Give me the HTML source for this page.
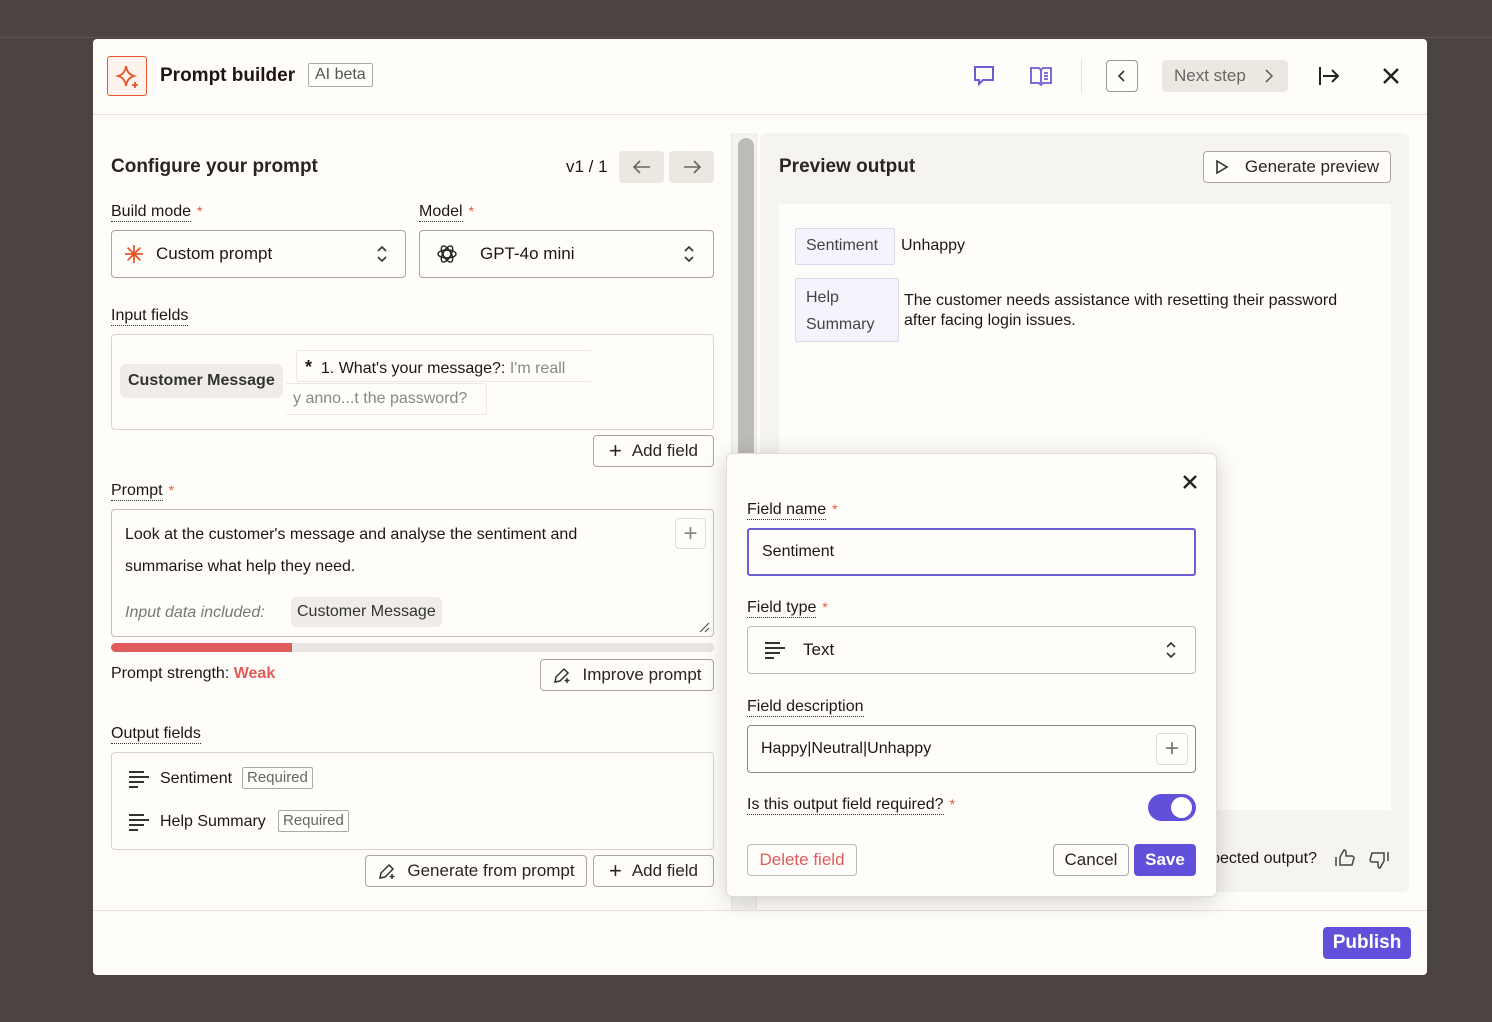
<!DOCTYPE html>
<html><head><meta charset="utf-8"><style>
*{box-sizing:border-box;margin:0;padding:0}
body{width:1492px;height:1022px;background:#4b4443;font-family:"Liberation Sans",sans-serif;color:#201515;position:relative;overflow:hidden;font-size:16px}
.a{position:absolute}
.modal{left:93px;top:39px;width:1334px;height:936px;background:#fffdf9;border-radius:4px}
.lbl{font-size:16px;border-bottom:1px dotted #333;line-height:19px;display:inline-block}
.star{color:#e4572e;margin-left:6px;font-size:14px}
.box{border:1px solid #c5c0bb;border-radius:4px;background:#fffdf9}
.btn{border:1px solid #aaa5a0;border-radius:4px;background:#fffdf9;font-size:16px;display:flex;align-items:center;justify-content:center;gap:10px;color:#2b2424}
.tag{border:1px solid #aaa;border-radius:2px;color:#666;font-size:15px;padding:1px 4px;line-height:18px}
.pill{background:#f0ede8;border-radius:6px}
svg{display:block}
</style></head><body>
<div class="a" style="left:0;top:0;width:1492px;height:38px;border-bottom:1px solid #5a5352"></div>
<div class="a modal">
 <div class="a" style="left:14px;top:17px;width:40px;height:40px;border:1px solid #e4572e;border-radius:3px;background:#fdf2ec">
  <svg width="40" height="40" viewBox="0 0 40 40"><path d="M18 9 Q19 17 26 19 Q19 21 18 29 Q17 21 10 19 Q17 17 18 9Z" fill="none" stroke="#e4572e" stroke-width="1.8"/><path d="M27 25 v6 M24 28 h6" stroke="#e4572e" stroke-width="1.8"/></svg>
 </div>
 <div class="a" style="left:67px;top:26px;font-size:19px;font-weight:bold">Prompt builder</div>
 <div class="a" style="left:215px;top:24px;border:1px solid #aaa;border-radius:2px;padding:2px 6px;font-size:16px;color:#555">AI beta</div>
 <svg class="a" style="left:879px;top:25px" width="24" height="24" viewBox="0 0 24 24"><path d="M3 3h18v13H11l-4 4v-4H3z" fill="none" stroke="#6a5ed6" stroke-width="2"/></svg>
 <svg class="a" style="left:936px;top:25px" width="24" height="24" viewBox="0 0 24 24"><path d="M2 4h8l2 2 2-2h8v15h-8l-2 2-2-2H2zM12 6v13M15 9h4M15 12h4M15 15h4" fill="none" stroke="#6a5ed6" stroke-width="1.8"/></svg>
 <div class="a" style="left:988px;top:20px;width:1px;height:34px;background:#e6e2dd"></div>
 <div class="a box" style="left:1013px;top:21px;width:32px;height:32px;border-color:#999;display:flex;align-items:center;justify-content:center"><svg width="12" height="12" viewBox="0 0 12 12"><path d="M8 1L3 6l5 5" fill="none" stroke="#333" stroke-width="1.6"/></svg></div>
 <div class="a" style="left:1069px;top:21px;width:126px;height:32px;background:#ebe8e2;border-radius:4px;color:#6b6562;font-size:17px;display:flex;align-items:center;padding-left:12px;gap:18px">Next step<svg width="10" height="14" viewBox="0 0 10 14"><path d="M2 1l6 6-6 6" fill="none" stroke="#6b6562" stroke-width="1.6"/></svg></div>
 <svg class="a" style="left:1224px;top:25px" width="24" height="24" viewBox="0 0 24 24"><path d="M3 3v18M6 12h15M15 6l6 6-6 6" fill="none" stroke="#222" stroke-width="2"/></svg>
 <svg class="a" style="left:1289px;top:28px" width="18" height="18" viewBox="0 0 18 18"><path d="M2 2l14 14M16 2L2 16" stroke="#222" stroke-width="2.4"/></svg>
 <div class="a" style="left:0;top:75px;width:1334px;height:1px;background:#e6e2dd"></div>

 <div class="a" style="left:18px;top:117px;font-size:19px;font-weight:bold;color:#2b2424">Configure your prompt</div>
 <div class="a" style="left:473px;top:118px;font-size:17px">v1 / 1</div>
 <div class="a" style="left:526px;top:112px;width:45px;height:32px;background:#ebe8e2;border-radius:4px;display:flex;align-items:center;justify-content:center"><svg width="18" height="14" viewBox="0 0 18 14"><path d="M17 7H2M7 1L1 7l6 6" fill="none" stroke="#6b6562" stroke-width="1.6"/></svg></div>
 <div class="a" style="left:576px;top:112px;width:45px;height:32px;background:#ebe8e2;border-radius:4px;display:flex;align-items:center;justify-content:center"><svg width="18" height="14" viewBox="0 0 18 14"><path d="M1 7h15M11 1l6 6-6 6" fill="none" stroke="#6b6562" stroke-width="1.6"/></svg></div>
 <div class="a" style="left:18px;top:150px;width:602px;height:10px;box-shadow:0 6px 8px -6px rgba(0,0,0,.12)"></div>

 <div class="a" style="left:18px;top:163px"><span class="lbl">Build mode</span><span class="star">*</span></div>
 <div class="a" style="left:326px;top:163px"><span class="lbl">Model</span><span class="star">*</span></div>
 <div class="a box" style="left:18px;top:191px;width:295px;height:48px;border-color:#aaa5a0;display:flex;align-items:center;padding-left:12px;gap:12px;font-size:17px">
  <svg width="20" height="20" viewBox="0 0 20 20"><path d="M10 1v18M1 10h18M3.6 3.6l12.8 12.8M16.4 3.6L3.6 16.4" stroke="#e4572e" stroke-width="1.8"/></svg>Custom prompt</div>
 <svg class="a" style="left:282px;top:206px" width="14" height="18" viewBox="0 0 14 18"><path d="M3 6l4-4 4 4M3 12l4 4 4-4" fill="none" stroke="#333" stroke-width="1.6"/></svg>
 <div class="a box" style="left:326px;top:191px;width:295px;height:48px;border-color:#aaa5a0;display:flex;align-items:center;padding-left:16px;gap:22px;font-size:17px">
  <svg width="22" height="22" viewBox="0 0 22 22"><g fill="none" stroke="#222" stroke-width="1.4"><circle cx="11" cy="11" r="4"/><ellipse cx="11" cy="11" rx="9" ry="4"/><ellipse cx="11" cy="11" rx="9" ry="4" transform="rotate(60 11 11)"/><ellipse cx="11" cy="11" rx="9" ry="4" transform="rotate(120 11 11)"/></g></svg>GPT-4o mini</div>
 <svg class="a" style="left:589px;top:206px" width="14" height="18" viewBox="0 0 14 18"><path d="M3 6l4-4 4 4M3 12l4 4 4-4" fill="none" stroke="#333" stroke-width="1.6"/></svg>

 <div class="a" style="left:18px;top:267px"><span class="lbl">Input fields</span></div>
 <div class="a box" style="left:18px;top:295px;width:603px;height:96px;border-color:#d8d4cf"></div>
 <div class="a pill" style="left:27px;top:325px;padding:8px 8px;font-weight:bold;font-size:16px;color:#333">Customer Message</div>
 <div class="a" style="left:203px;top:311px;width:295px;height:32px;border:1px solid #ece9e4;border-right:none;border-radius:4px 0 0 4px;padding:6px 8px;font-size:16px;white-space:nowrap;overflow:hidden"><b style="font-size:18px">*</b>&nbsp; 1. What's your message?: <span style="color:#888">I'm reall</span></div>
 <div class="a" style="left:193px;top:344px;width:201px;height:32px;border:1px solid #ece9e4;border-left:none;border-radius:0 4px 4px 0;padding:6px 7px;font-size:16px;color:#888">y anno...t the password?</div>
 <div class="a btn" style="left:500px;top:396px;width:121px;height:32px;font-size:17px"><span style="font-size:22px;font-weight:300">+</span>Add field</div>

 <div class="a" style="left:18px;top:442px"><span class="lbl">Prompt</span><span class="star">*</span></div>
 <div class="a box" style="left:18px;top:470px;width:603px;height:128px;border-color:#c5c0bb"></div>
 <div class="a" style="left:32px;top:480px;font-size:16px;line-height:32px;color:#201515">Look at the customer's message and analyse the sentiment and<br>summarise what help they need.</div>
 <div class="a box" style="left:582px;top:479px;width:31px;height:31px;border-color:#ddd;display:flex;align-items:center;justify-content:center;color:#888;font-size:24px;font-weight:300">+</div>
 <div class="a" style="left:32px;top:565px;font-style:italic;color:#777;font-size:16px">Input data included:</div>
 <div class="a pill" style="left:198px;top:558px;padding:6px 6px;font-size:16px;color:#333">Customer Message</div>
 <svg class="a" style="left:605px;top:582px" width="12" height="12" viewBox="0 0 12 12"><path d="M11 2L2 11M11 7L7 11" stroke="#555" stroke-width="1.2"/></svg>
 <div class="a" style="left:18px;top:604px;width:603px;height:9px;background:#e9e6e1;border-radius:5px"></div>
 <div class="a" style="left:18px;top:604px;width:181px;height:9px;background:#e05c5c;border-radius:5px 0 0 5px"></div>
 <div class="a" style="left:18px;top:626px;font-size:16px">Prompt strength: <b style="color:#e05c5c">Weak</b></div>
 <div class="a btn" style="left:447px;top:620px;width:174px;height:32px;font-size:17px"><svg width="20" height="20" viewBox="0 0 20 20"><path d="M3 17l1-5 8-8 4 4-8 8zM12 4l4 4M15 13v5M12.5 15.5h5" fill="none" stroke="#333" stroke-width="1.5"/></svg>Improve prompt</div>

 <div class="a" style="left:18px;top:685px"><span class="lbl">Output fields</span></div>
 <div class="a box" style="left:18px;top:713px;width:603px;height:98px;border-color:#d8d4cf"></div>
 <svg class="a" style="left:36px;top:730px" width="20" height="20" viewBox="0 0 20 20"><path d="M0 3h15M0 8h20M0 13h15M0 18h9" stroke="#333" stroke-width="2"/></svg>
 <div class="a" style="left:67px;top:731px;font-size:16px">Sentiment</div>
 <div class="a tag" style="left:149px;top:728px">Required</div>
 <svg class="a" style="left:36px;top:773px" width="20" height="20" viewBox="0 0 20 20"><path d="M0 3h15M0 8h20M0 13h15M0 18h9" stroke="#333" stroke-width="2"/></svg>
 <div class="a" style="left:67px;top:774px;font-size:16px">Help Summary</div>
 <div class="a tag" style="left:185px;top:771px">Required</div>
 <div class="a btn" style="left:272px;top:816px;width:222px;height:32px;font-size:17px"><svg width="20" height="20" viewBox="0 0 20 20"><path d="M3 17l1-5 8-8 4 4-8 8zM12 4l4 4M15 13v5M12.5 15.5h5" fill="none" stroke="#333" stroke-width="1.5"/></svg>Generate from prompt</div>
 <div class="a btn" style="left:500px;top:816px;width:121px;height:32px;font-size:17px"><span style="font-size:22px;font-weight:300">+</span>Add field</div>

 <div class="a" style="left:638px;top:94px;width:26px;height:778px;background:#f5f3ef;border-left:1px solid #e8e5e0;border-right:1px solid #e8e5e0"></div>
 <div class="a" style="left:645px;top:99px;width:16px;height:340px;background:#bdbbb9;border-radius:8px 8px 0 0"></div>

 <div class="a" style="left:667px;top:94px;width:649px;height:759px;background:#f6f4f0;border-radius:6px"></div>
 <div class="a" style="left:686px;top:117px;font-size:19px;font-weight:bold;color:#2b2424">Preview output</div>
 <div class="a btn" style="left:1110px;top:112px;width:188px;height:32px;font-size:17px;gap:16px"><svg width="14" height="16" viewBox="0 0 14 16"><path d="M2 2l10 6-10 6z" fill="none" stroke="#333" stroke-width="1.6"/></svg>Generate preview</div>
 <div class="a" style="left:686px;top:165px;width:612px;height:606px;background:#fffdf9"></div>
 <div class="a" style="left:702px;top:189px;width:100px;height:37px;background:#f5f3fb;border:1px solid #dcd8ec;border-radius:2px;padding:8px 10px;font-size:16px;color:#444">Sentiment</div>
 <div class="a" style="left:808px;top:198px;font-size:16px">Unhappy</div>
 <div class="a" style="left:702px;top:239px;width:104px;height:64px;background:#f5f3fb;border:1px solid #dcd8ec;border-radius:2px;padding:5px 10px;font-size:16px;color:#444;line-height:27px">Help<br>Summary</div>
 <div class="a" style="left:811px;top:252px;font-size:16px;line-height:20px">The customer needs assistance with resetting their password<br>after facing login issues.</div>
 <div class="a" style="right:110px;top:811px;font-size:16px;white-space:nowrap">Is this the expected output?</div>
 <svg class="a" style="left:1241px;top:808px" width="22" height="22" viewBox="0 0 22 22"><path d="M2 10v9M6 10l4-7c2 0 2 2 2 3v3h6c1 0 2 1 2 2l-2 7H6z" fill="none" stroke="#444" stroke-width="1.5"/></svg>
 <svg class="a" style="left:1275px;top:810px" width="22" height="22" viewBox="0 0 22 22"><path d="M20 12V3M16 12l-4 7c-2 0-2-2-2-3v-3H4c-1 0-2-1-2-2l2-7h12z" fill="none" stroke="#444" stroke-width="1.5"/></svg>

 <div class="a" style="left:0;top:871px;width:1334px;height:1px;background:#e6e2dd"></div>
 <div class="a" style="left:1230px;top:888px;width:88px;height:32px;background:#6150d9;border-radius:4px;color:#fff;font-weight:bold;font-size:19px;display:flex;align-items:center;justify-content:center">Publish</div>
</div>

<div class="a" style="left:726px;top:453px;width:491px;height:444px;background:#fffdf9;border:1px solid #e0dcd7;border-radius:6px;box-shadow:0 4px 24px rgba(0,0,0,.18)">
 <svg class="a" style="left:455px;top:20px" width="16" height="16" viewBox="0 0 16 16"><path d="M2 2l12 12M14 2L2 14" stroke="#222" stroke-width="2.4"/></svg>
 <div class="a" style="left:20px;top:46px"><span class="lbl">Field name</span><span class="star">*</span></div>
 <div class="a" style="left:20px;top:74px;width:449px;height:48px;border:2px solid #6a5ed6;border-radius:3px;padding:13px 13px;font-size:16px">Sentiment</div>
 <div class="a" style="left:20px;top:144px"><span class="lbl">Field type</span><span class="star">*</span></div>
 <div class="a box" style="left:20px;top:172px;width:449px;height:48px;border-color:#bbb;display:flex;align-items:center;padding-left:17px;gap:18px;font-size:17px"><svg width="20" height="20" viewBox="0 0 20 20"><path d="M0 3h15M0 8h20M0 13h15M0 18h9" stroke="#333" stroke-width="2"/></svg>Text</div>
 <svg class="a" style="left:437px;top:187px" width="14" height="18" viewBox="0 0 14 18"><path d="M3 6l4-4 4 4M3 12l4 4 4-4" fill="none" stroke="#333" stroke-width="1.6"/></svg>
 <div class="a" style="left:20px;top:243px"><span class="lbl">Field description</span></div>
 <div class="a box" style="left:20px;top:271px;width:449px;height:48px;border-color:#888;padding:14px 13px;font-size:16px">Happy|Neutral|Unhappy</div>
 <div class="a box" style="left:429px;top:279px;width:32px;height:32px;border-color:#ddd;display:flex;align-items:center;justify-content:center;color:#777;font-size:24px;font-weight:300">+</div>
 <div class="a" style="left:20px;top:341px"><span class="lbl">Is this output field required?</span><span class="star">*</span></div>
 <div class="a" style="left:421px;top:340px;width:48px;height:27px;background:#6150d9;border-radius:14px"><div class="a" style="left:23px;top:3px;width:21px;height:21px;background:#fff;border-radius:50%"></div></div>
 <div class="a btn" style="left:20px;top:390px;width:110px;height:32px;color:#e05c5c;border-color:#bbb;font-size:17px">Delete field</div>
 <div class="a btn" style="left:326px;top:390px;width:76px;height:32px;border-color:#aaa;font-size:17px">Cancel</div>
 <div class="a" style="left:407px;top:390px;width:62px;height:32px;background:#6150d9;border-radius:4px;color:#fff;font-weight:bold;font-size:17px;display:flex;align-items:center;justify-content:center">Save</div>
</div>
</body></html>
